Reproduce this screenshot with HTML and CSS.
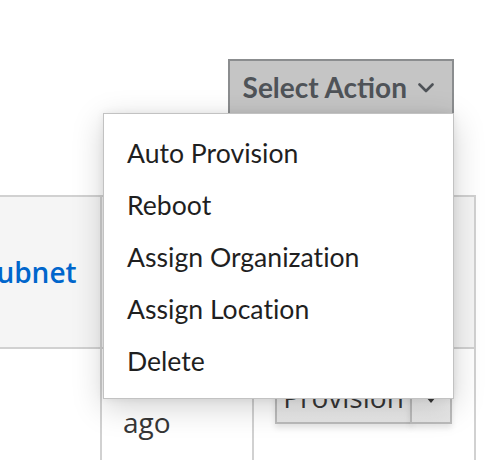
FILE: index.html
```html
<!DOCTYPE html>
<html>
<head>
<meta charset="utf-8">
<link rel="stylesheet" href="styles.css">
</head>
<body>
<div class="page">
  <div class="toolbar">
    <div class="dropdown">
      <button class="toggle">Select Action
        <svg class="chev" width="16" height="10" viewBox="0 0 16 10"><path d="M1.5 1.5 L8 8 L14.5 1.5" fill="none" stroke="#4f5358" stroke-width="2.6" stroke-linecap="round" stroke-linejoin="round"/></svg>
      </button>
      <ul class="menu">
        <li>Auto Provision</li>
        <li>Reboot</li>
        <li>Assign Organization</li>
        <li>Assign Location</li>
        <li>Delete</li>
      </ul>
    </div>
  </div>
  <table class="hosts">
    <colgroup><col class="w1"><col class="w2"><col class="w3"></colgroup>
    <thead>
      <tr>
        <th class="c1"><a href="#">Subnet</a></th>
        <th class="c2">Last report</th>
        <th class="c3">Actions</th>
      </tr>
    </thead>
    <tbody>
      <tr class="row">
        <td></td>
        <td class="time">2 hours ago</td>
        <td class="act">
          <div class="btn-group">
            <button class="btn main">Provision</button>
            <button class="btn split"><span class="caret"></span></button>
          </div>
        </td>
      </tr>
      <tr class="next"><td></td><td></td><td></td></tr>
    </tbody>
  </table>
</div>
</body>
</html>
```

FILE: styles.css
```css
html, body {
  margin: 0;
  padding: 0;
  background: #fff;
}
.page {
  width: 496px;
  height: 460px;
  overflow: hidden;
  font-family: "Open Sans", "Liberation Sans", sans-serif;
}
.toolbar {
  display: flex;
  justify-content: flex-end;
  padding: 59px 42px 0 0;
  height: 136px;
}
.dropdown {
  position: relative;
  height: 55px;
}
.toggle {
  display: flex;
  align-items: center;
  gap: 11px;
  box-sizing: border-box;
  height: 57px;
  padding: 0 18px 2px 13px;
  background: #c5c5c5;
  border: 2px solid #8b8d8f;
  border-radius: 0;
  font-family: Lato, "Open Sans", sans-serif;
  font-weight: 700;
  font-size: 28px;
  color: #4f5358;
}
.chev { display: block; margin-top: 2px; }
.menu {
  position: absolute;
  top: 54px;
  right: 0;
  width: 351px;
  box-sizing: border-box;
  margin: 0;
  padding: 13px 0 11px;
  list-style: none;
  background: #fff;
  border: 1px solid #c2c2c2;
  box-shadow: 0 8px 30px rgba(0, 0, 0, 0.18), 0 0 8px rgba(0, 0, 0, 0.07);
  z-index: 5;
}
.menu li {
  height: 52px;
  line-height: 52px;
  padding-left: 23px;
  font-family: Lato, "Open Sans", sans-serif;
  font-size: 26.6px;
  font-variant-ligatures: none;
  color: #1f1f1f;
  white-space: nowrap;
}
.hosts {
  margin-left: -60px;
  border-collapse: collapse;
  table-layout: fixed;
  width: 534px;
  font-size: 28px;
  color: #363636;
}
.w1 { width: 160px; }
.w2 { width: 152px; }
.w3 { width: 222px; }
.hosts th, .hosts td {
  border: 2px solid #d1d1d1;
  padding: 0;
}
.hosts thead th {
  height: 150px;
  background: #f5f5f5;
  text-align: left;
  vertical-align: middle;
  font-weight: 600;
}
.c1 { padding-left: 39px !important; }
.c1 a {
  color: #0066cc;
  text-decoration: none;
}
.c2, .c3 { padding-left: 20px !important; font-size: 20px; }
.row td {
  height: 106px;
  vertical-align: top;
}
.time {
  padding: 19px 10px 0 21px !important;
  line-height: 36px;
}
.act {
  padding: 27px 0 0 21px !important;
}
.btn-group {
  display: flex;
}
.btn {
  box-sizing: border-box;
  height: 48px;
  border: 2px solid #bbbbbb;
  background: linear-gradient(#f5f5f5, #e6e6e6);
  box-shadow: 0 4px 6px rgba(3, 3, 3, 0.1);
  font-family: "Open Sans", "Liberation Sans", sans-serif;
  font-size: 28px;
  color: #363636;
  padding: 0;
}
.main { width: 137px; padding-bottom: 9px; }
.split {
  width: 42px;
  margin-left: -2px;
  display: flex;
  justify-content: center;
  align-items: flex-start;
  padding-top: 19px;
}
.caret {
  width: 0;
  height: 0;
  border-top: 6px solid #363636;
  border-left: 5px solid transparent;
  border-right: 5px solid transparent;
}
.next td { height: 30px; }
```
